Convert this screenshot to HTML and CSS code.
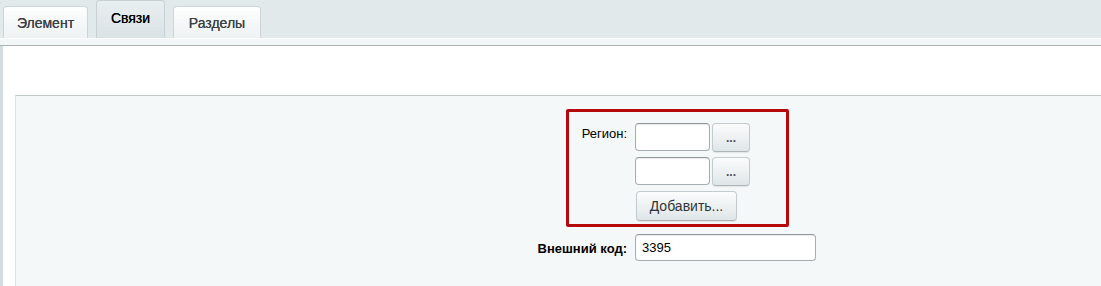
FILE: index.html
```html
<!DOCTYPE html>
<html lang="ru">

<head>
    <meta charset="UTF-8">
    <title>Связи</title>
    <link rel="stylesheet" href="styles.css">
</head>

<body>
    <div class="tabs">
        <a class="tab tab-element">Элемент</a>
        <a class="tab tab-active">Связи</a>
        <a class="tab tab-sections">Разделы</a>
    </div>
    <div class="tabs-line"></div>

    <div class="content">
        <div class="panel">
            <div class="form-row row-region">
                <div class="label">Регион:</div>
                <div class="field">
                    <div class="pick">
                        <input type="text" class="input input-short">
                        <button class="btn btn-dots">...</button>
                    </div>
                    <div class="pick">
                        <input type="text" class="input input-short">
                        <button class="btn btn-dots">...</button>
                    </div>
                    <button class="btn btn-add">Добавить...</button>
                </div>
                <div class="mark"></div>
            </div>
            <div class="form-row row-code">
                <div class="label label-bold">Внешний код:</div>
                <div class="field">
                    <input type="text" class="input input-long" value="3395">
                </div>
            </div>
        </div>
    </div>
</body>

</html>
```

FILE: styles.css
```css
body {
    margin: 0;
    font-family: "Liberation Sans", Arial, sans-serif;
    font-size: 13px;
    color: #000;
    background-color: #e1e9eb;
}

.tabs {
    display: flex;
    align-items: flex-end;
    gap: 8px;
    height: 38px;
    padding-left: 3px;
}

.tab {
    box-sizing: border-box;
    width: 85px;
    height: 32px;
    line-height: 33px;
    text-align: center;
    font-size: 14px;
    color: #3b4144;
    text-shadow: 0 0 0.3px #3b4144;
    background: linear-gradient(#fdfefe, #eef2f3);
    border: 1px solid #cdd5d7;
    border-bottom: none;
    border-radius: 4px 4px 0 0;
}

.tab-active {
    width: 69px;
    height: 38px;
    padding-bottom: 4px;
    line-height: 35px;
    color: #000;
    text-shadow: 0 0 0.4px #000;
    background: linear-gradient(#e9eff1, #d9e2e5);
    border-color: #c7d0d3;
}

.tab-sections {
    width: 88px;
}

.tabs-line {
    height: 6px;
    background-color: #f3f6f7;
    border-top: 1px solid #fdfefe;
    border-bottom: 1px solid #a9b1b3;
    box-shadow: 0 1px 0 #d3d9db;
}

.content {
    padding-top: 49px;
    background-color: #fff;
    border-left: 3px solid #d3dcdf;
}

.panel {
    margin-left: 12px;
    padding: 27px 0 25px;
    background-color: #f5f8f9;
    border-top: 1px solid #c4cbcd;
    border-left: 1px solid #dde3e5;
}

.form-row {
    position: relative;
    display: grid;
    grid-template-columns: 612px auto;
    column-gap: 7px;
}

.row-code {
    margin-top: 13px;
}

.label {
    text-align: right;
    color: #000;
    padding-top: 3px;
    padding-right: 1px;
}

.row-code .label {
    padding-top: 7px;
}

.label-bold {
    font-weight: bold;
}

.field {
    display: flex;
    flex-direction: column;
    align-items: flex-start;
    gap: 5px;
}

.pick {
    display: flex;
    gap: 2px;
}

.input {
    box-sizing: border-box;
    height: 28px;
    padding: 0 6px;
    font-family: "Liberation Sans", Arial, sans-serif;
    font-size: 13px;
    color: #000;
    background-color: #fff;
    border: 1px solid #a6adb0;
    border-top-color: #8f9699;
    border-radius: 4px;
    box-shadow: inset 0 1px 1px rgba(0, 0, 0, 0.08);
}

.input-short {
    width: 75px;
}

.input-long {
    width: 181px;
    height: 27px;
}

.btn {
    box-sizing: border-box;
    height: 29px;
    font-family: "Liberation Sans", Arial, sans-serif;
    font-size: 13px;
    color: #3f4649;
    background: linear-gradient(#fbfcfc, #dfe6e8);
    border: 1px solid #c4cbce;
    border-bottom-color: #aeb5b8;
    border-radius: 4px;
    box-shadow: 0 1px 1px rgba(0, 0, 0, 0.08);
    cursor: pointer;
}

.btn-dots {
    width: 38px;
    padding: 0;
    font-size: 12px;
    font-weight: bold;
    color: #4a5255;
}

.btn-add {
    height: 30px;
    width: 101px;
    margin-left: 1px;
    padding: 0;
    font-size: 14px;
    color: #2f3537;
}

.mark {
    position: absolute;
    left: 550px;
    top: -14px;
    width: 223px;
    height: 118px;
    box-sizing: border-box;
    border: 3px solid #b5090d;
    border-radius: 2px;
}
```
